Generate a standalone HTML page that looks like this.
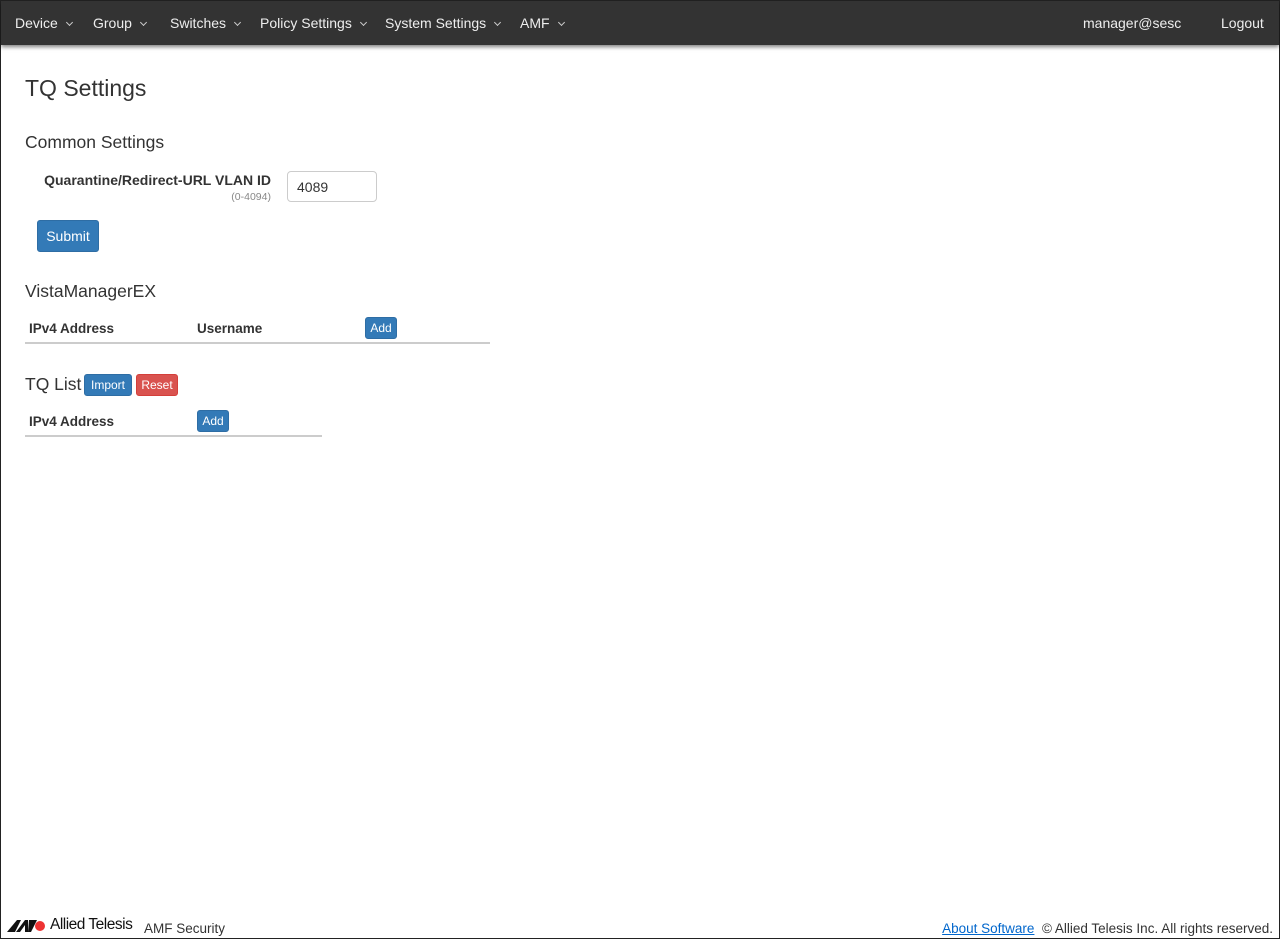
<!DOCTYPE html>
<html><head><meta charset="utf-8"><style>
*{box-sizing:border-box}
html,body{margin:0;padding:0;width:1280px;height:939px;overflow:hidden;background:#fff}
body{font-family:"Liberation Sans",sans-serif;color:#333;font-size:14px;border:1px solid #222;position:relative}
.nav{position:absolute;left:0;top:0;width:1278px;height:44px;background:#333;box-shadow:0 2px 4px rgba(0,0,0,.5);color:#eee;font-size:14px}
.nav span{position:absolute;top:14px;white-space:nowrap}
.car{display:inline-block;width:5px;height:5px;border-right:1px solid #ccc;border-bottom:1px solid #ccc;transform:rotate(45deg);margin-left:9px;position:relative;top:-3px}
h1{position:absolute;left:24px;top:74px;margin:0;font-size:23px;font-weight:normal}
h3{position:absolute;margin:0;font-size:17.5px;font-weight:normal;left:24px}
.btn{position:absolute;background:#337ab7;color:#fff;border-radius:3px;border:1px solid #2e6da4;text-align:center;font-size:12px}
.th{position:absolute;font-weight:bold;font-size:13.5px;white-space:nowrap}
.line{position:absolute;height:2px;background:#ccc;left:24px}
</style></head><body>
<div class="nav">
<span style="left:14px">Device<i class="car"></i></span>
<span style="left:92px">Group<i class="car"></i></span>
<span style="left:169px">Switches<i class="car"></i></span>
<span style="left:259px">Policy Settings<i class="car"></i></span>
<span style="left:384px">System Settings<i class="car"></i></span>
<span style="left:519px">AMF<i class="car"></i></span>
<span style="left:1082px">manager@sesc</span>
<span style="left:1220px">Logout</span>
</div>
<h1>TQ Settings</h1>
<h3 style="top:131px">Common Settings</h3>
<div class="th" style="left:0;width:270px;text-align:right;top:171px;font-size:14px">Quarantine/Redirect-URL VLAN ID</div>
<div style="position:absolute;left:200px;width:70px;text-align:right;top:190px;font-size:10.5px;color:#888">(0-4094)</div>
<div style="position:absolute;left:286px;top:170px;width:90px;height:31px;border:1px solid #ccc;border-radius:4px;padding:7px 9px;font-size:14px">4089</div>
<div class="btn" style="left:36px;top:219px;width:62px;height:32px;font-size:14px;line-height:30px">Submit</div>
<h3 style="top:280px">VistaManagerEX</h3>
<div class="th" style="left:28px;top:320px">IPv4 Address</div>
<div class="th" style="left:196px;top:320px">Username</div>
<div class="btn" style="left:364px;top:316px;width:32px;height:22px;line-height:20px">Add</div>
<div class="line" style="top:341px;width:465px"></div>
<h3 style="top:373px">TQ List</h3>
<div class="btn" style="left:83px;top:373px;width:48px;height:22px;line-height:20px">Import</div>
<div class="btn" style="left:135px;top:373px;width:42px;height:22px;line-height:20px;background:#d9534f;border-color:#d43f3a">Reset</div>
<div class="th" style="left:28px;top:413px">IPv4 Address</div>
<div class="btn" style="left:196px;top:409px;width:32px;height:22px;line-height:20px">Add</div>
<div class="line" style="top:434px;width:297px"></div>
<div style="position:absolute;left:6px;top:917px;width:40px;height:16px">
<svg width="40" height="16" viewBox="0 0 40 16"><polygon points="0,14 10,2 14,2 8,14" fill="#111"/><polygon points="9,14 18,2 21,2 21,14 18,14 18,7 13,14" fill="#111"/><polygon points="22,2 30,2 24,14 21,14" fill="#111"/><circle cx="33" cy="8" r="5" fill="#e33"/></svg></div>
<div style="position:absolute;left:49px;top:915px;font-size:15.5px;color:#111;letter-spacing:-0.5px">Allied Telesis</div>
<div style="position:absolute;left:143px;top:920px;font-size:13.5px;color:#333">AMF Security</div>
<div style="position:absolute;right:6px;top:920px;font-size:13.5px;color:#333"><span style="color:#0066cc;text-decoration:underline">About Software</span>&nbsp; © Allied Telesis Inc. All rights reserved.</div>
</body></html>
